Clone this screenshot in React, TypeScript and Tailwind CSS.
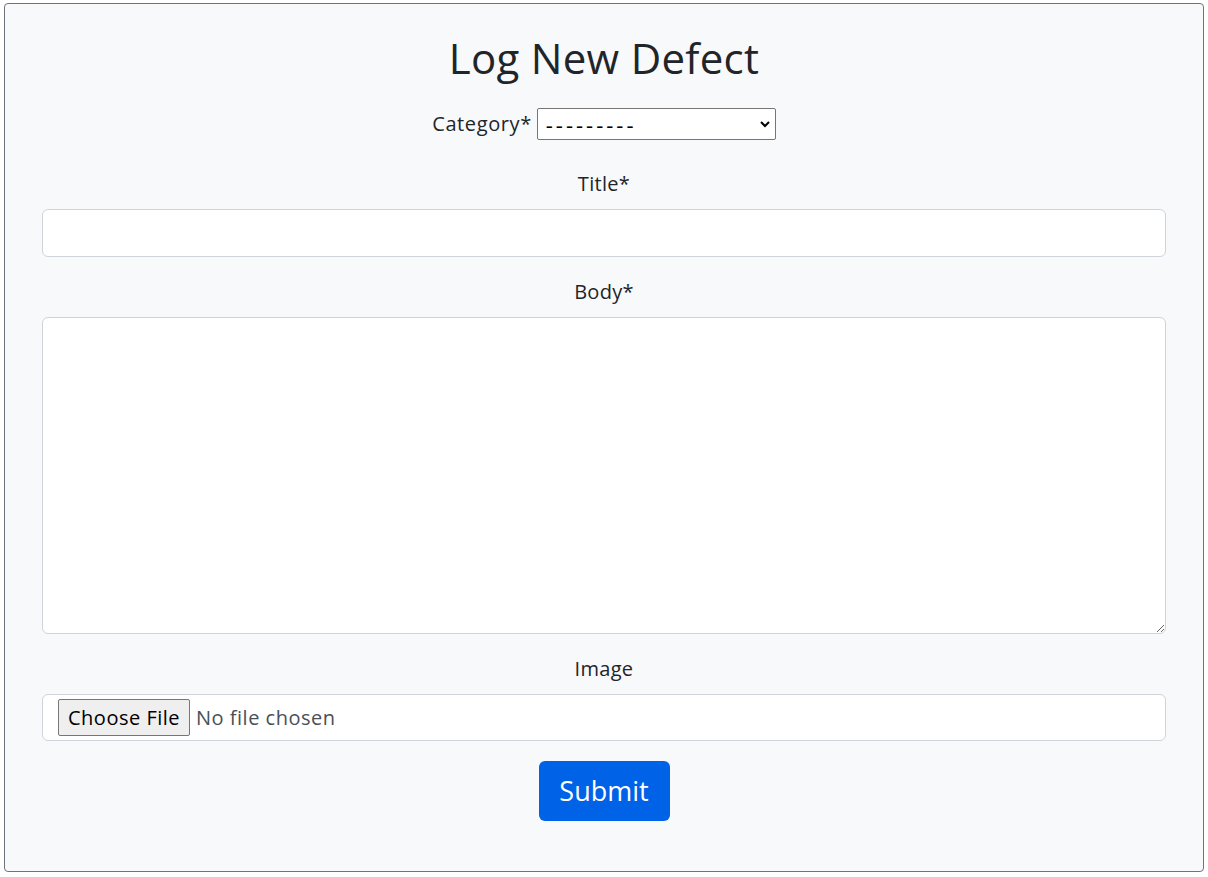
import React from 'react';

const font = { fontFamily: '"Open Sans", "Liberation Sans", sans-serif' };

export default function App() {
  return (
    <div className="w-[1208px] h-[877px] bg-white pt-[3px] pl-[4px]" style={font}>
      <div className="w-[1200px] h-[869px] bg-[#f8f9fa] border border-[#6c757d] rounded-[4px] px-[37px] text-[#212529]">
        <h1 className="text-[42px] font-medium text-center leading-none pt-[33px] pb-[29px] tracking-[0.3px]">Log New Defect</h1>

        <div className="flex items-center justify-center gap-[5px] h-[32px]">
          <label className="text-[20px] tracking-[0.6px]">Category*</label>
          <div className="relative w-[239px] h-[32px]">
            <select className="appearance-none w-full h-full bg-white border border-[#767676] rounded-[2px] pl-[8px] text-[22px] leading-none tracking-[3px] text-black outline-none">
              <option>---------</option>
            </select>
            <svg className="absolute right-[5px] top-[11px] pointer-events-none" width="12" height="10" viewBox="0 0 12 10">
              <path d="M2 3 L6 7 L10 3" fill="none" stroke="#000" strokeWidth="2" />
            </svg>
          </div>
        </div>

        <div className="flex flex-col">
          <label className="text-[20px] tracking-[0.3px] text-center h-[24px] mt-[32px] mb-[13px] leading-[24px]">Title*</label>
          <input className="h-[48px] bg-white border border-[#ced4da] rounded-[6px] px-3 outline-none" />

          <label className="text-[20px] tracking-[0.3px] text-center h-[24px] mt-[23px] mb-[13px] leading-[24px]">Body*</label>
          <textarea className="h-[317px] bg-white border border-[#ced4da] rounded-[6px] px-3 outline-none" />

          <label className="text-[20px] tracking-[0.3px] text-center h-[24px] mt-[23px] mb-[13px] leading-[24px]">Image</label>
          <div className="h-[47px] bg-white border border-[#ced4da] rounded-[6px] flex items-center pl-[15px] gap-[6px]">
            <span className="h-[37px] px-[9px] flex items-center bg-[#efefef] border border-[#767676] rounded-[2px] text-[20px] tracking-[0.5px] text-black">Choose File</span>
            <span className="text-[20px] tracking-[0.5px] text-[#495057]">No file chosen</span>
          </div>

          <div className="flex justify-center mt-[20px]">
            <button className="w-[131px] h-[60px] bg-[#0062e6] text-white text-[27px] rounded-[6px]">Submit</button>
          </div>
        </div>
      </div>
    </div>
  );
}
